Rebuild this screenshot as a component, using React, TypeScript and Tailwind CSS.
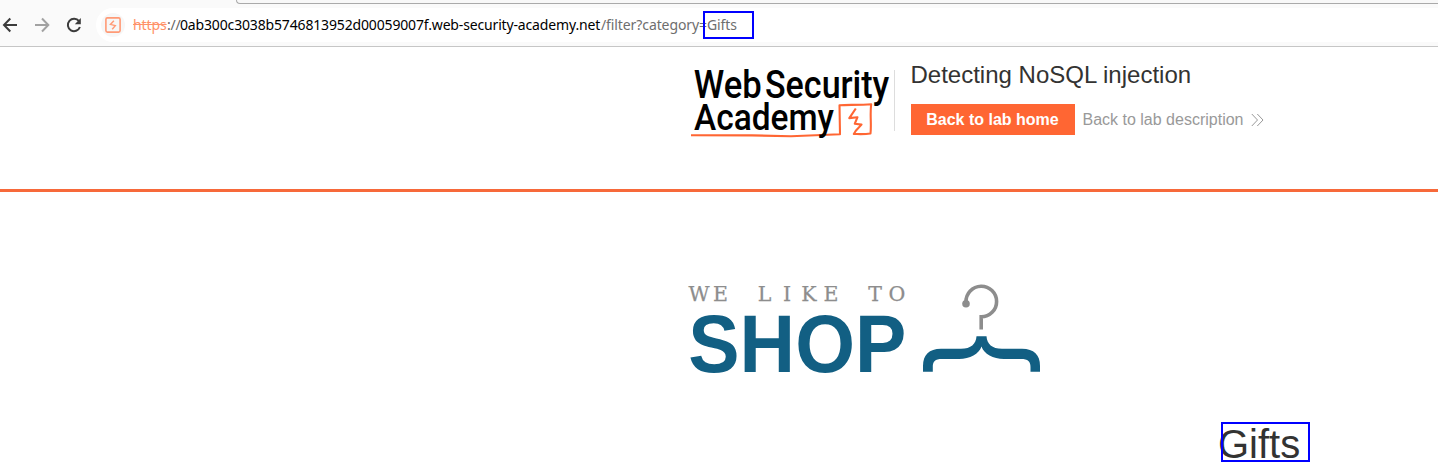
import React from "react";

function BrowserBar() {
  return (
    <div className="relative flex h-[47px] flex-col overflow-hidden border-b border-[#c6c6c6] bg-[#fafafa]">
      <div className="ml-[236px] h-1 shrink-0 rounded-bl-[7px] border-b border-l border-[#aaaaaa] bg-[#f8f8f8]" />
      <div className="flex flex-1 pt-1">
        <svg className="h-[34px] w-24 shrink-0" viewBox="0 0 96 34" fill="none" strokeWidth="2">
          <path d="M17 17H4.5M10.3 10.5L4 17L10.3 23.5" stroke="#3c3c3c" />
          <path d="M35 17H48M42 10.5L48.3 17L42 23.5" stroke="#a2a2a2" />
          <path d="M79 13.2A6.2 6.2 0 1 0 79.9 19" stroke="#3c3c3c" />
          <path d="M80.8 10V16.2H74.8Z" fill="#3c3c3c" />
        </svg>
        <div className="flex h-[34px] flex-1 items-center rounded-l-full bg-white pl-[5px]">
          <div className="flex size-6 shrink-0 items-center justify-center rounded-full bg-[#f7f7f7]">
            <svg className="size-4" viewBox="0 0 16 16" fill="none" stroke="#ff9a76">
              <rect x="0.9" y="0.9" width="14.2" height="14.2" rx="1.5" strokeWidth="1.6" />
              <path d="M8.9 3.8L5.4 7.4L10.3 8.6L7.2 12.2" strokeWidth="1.4" />
            </svg>
          </div>
          <div className="ml-2 flex font-['Noto_Sans',sans-serif] text-[14px] leading-[20px] whitespace-pre">
            <span className="w-[34px] tracking-[-0.1px] text-[#ff9269] line-through">https</span>
            <span className="w-[13px] tracking-[-0.2px] text-[#666]">://</span>
            <span className="w-[421px] tracking-[-0.155px] text-black">0ab300c3038b5746813952d00059007f.web-security-academy.net</span>
            <span className="tracking-[-0.1px] text-[#6e6e6e]">/filter?category=Gifts</span>
          </div>
        </div>
      </div>
      <div className="absolute left-[703px] top-[11px] h-7 w-[51px] border-2 border-[#0000ff]" />
    </div>
  );
}

function AcademyLogo() {
  return (
    <svg className="h-[76px] w-[204px] shrink-0 overflow-visible" viewBox="690 65 204 76" fill="none">
      <g fill="#000" fontFamily="Roboto, sans-serif" fontWeight="500" fontSize="38.5">
        <text x="693.8" y="97.7" textLength="68" lengthAdjust="spacingAndGlyphs">Web</text>
        <text x="765" y="97.7" textLength="124.3" lengthAdjust="spacingAndGlyphs">Security</text>
      </g>
      <path d="M691 135.2L752 135.4L791 136.2L840 134.2L839.5 105.2C850 104.8 861 105 871.2 104.2C869.8 114 871.6 124 870.5 133.5C864 134.5 858 134 853.8 134L855.8 130.8L861.5 124.6L854.8 123.7L857.4 117.3L849.3 118.1L855.8 108.5" stroke="#ff6633" strokeWidth="2.1" strokeLinejoin="round" />
      <text x="694" y="130" textLength="140" lengthAdjust="spacingAndGlyphs" fill="#000" fontFamily="Roboto, sans-serif" fontWeight="500" fontSize="37">Academy</text>
    </svg>
  );
}

function LabHeader() {
  return (
    <header className="flex h-[145px] border-b-[3px] border-[#f7693a] bg-white pl-[690px] pt-[18px]">
      <AcademyLogo />
      <div className="mt-[5px] h-[61px] w-px bg-[#dddddd]" />
      <div className="ml-[15.5px] font-['Liberation_Sans',sans-serif]">
        <h2 className="mt-[-4px] text-[24px] leading-[28px] text-[#333332]">Detecting NoSQL injection</h2>
        <div className="mt-[15px] flex items-center">
          <a className="flex h-[31px] w-[164px] items-center justify-center bg-[#ff6633] text-[16px] font-bold text-white">Back to lab home</a>
          <a className="ml-2 flex items-center text-[16px] text-[#999999]">
            Back to lab description
            <svg className="ml-2 h-3 w-3 overflow-visible" viewBox="0 0 12 12" fill="none" stroke="currentColor" strokeWidth="1">
              <path d="M0.8 0L6.5 6L0.8 12M6.3 0L12 6L6.3 12" />
            </svg>
          </a>
        </div>
      </div>
    </header>
  );
}

function ShopLogo() {
  return (
    <svg className="h-[92px] w-[354px] overflow-visible" viewBox="688 283 354 92" fill="none">
      <g transform="translate(688 300.5)">
        <text x="11 32.5 54.5 76.5 99 121 143 165 187 209" y="0" textAnchor="middle" fill="#8d8d8d" stroke="#8d8d8d" strokeWidth="0.25" fontFamily="DejaVu Serif, serif" fontSize="20.5">WE LIKE TO</text>
      </g>
      <text x="688.3" y="372" textLength="218" lengthAdjust="spacingAndGlyphs" fill="#125f83" fontFamily="Liberation Sans, sans-serif" fontWeight="700" fontSize="81">SHOP</text>
      <path d="M966 302A15.3 15.3 0 1 1 981.2 316.8V329.5" stroke="#8d8d8d" strokeWidth="3.6" />
      <circle cx="966" cy="303.7" r="3.8" fill="#8d8d8d" />
      <path d="M976.5 336.3H986.5C987 344 992 348.8 1002 348.8H1022C1034 348.8 1040 355 1040 366V371.8H1030.5V367C1030.5 361.5 1028 359 1021 359H1004C993 359 984 354 981.5 346.5C979 354 970 359 959 359H942C935 359 932.8 361.5 932.8 367V371.8H923V366C923 355 929 348.8 941 348.8H961C971 348.8 976 344 976.5 336.3Z" fill="#125f83" />
    </svg>
  );
}

export default function App() {
  return (
    <div className="h-[467px] overflow-hidden bg-white">
      <BrowserBar />
      <LabHeader />
      <main className="pl-[688px] pt-[91px]">
        <ShopLogo />
        <div className="relative ml-[530px] mt-[46px] w-fit">
          <h1 className="font-['Liberation_Sans',sans-serif] text-[40px] leading-[46px] text-[#333332]">Gifts</h1>
          <div className="absolute left-[3px] top-px h-10 w-[89px] border-2 border-[#0000ff]" />
        </div>
      </main>
    </div>
  );
}
